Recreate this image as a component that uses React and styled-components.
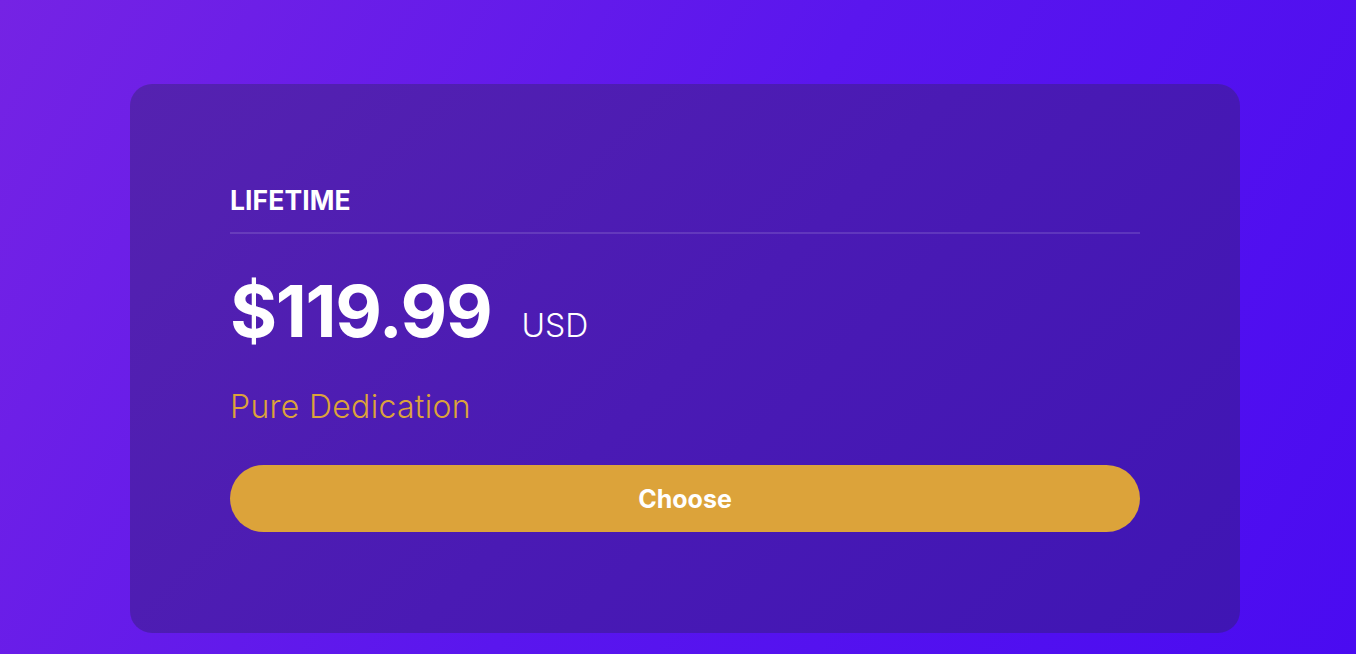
import React from "react";
import styled, { createGlobalStyle } from "styled-components";

const Global = createGlobalStyle`
  html, body { margin: 0; padding: 0; }
  body {
    font-family: Inter, "Noto Sans", sans-serif;
    background: linear-gradient(120deg, #7523e4 0%, #5a16ee 50%, #4a0bf1 100%);
    min-height: 100vh;
  }
`;

const Page = styled.div`
  min-height: 100vh;
  box-sizing: border-box;
  padding: 84px 0 22px 130px;
  display: flex;
  justify-content: flex-start;
  align-items: flex-start;
`;

const Card = styled.section`
  width: 1110px;
  box-sizing: border-box;
  padding: 99px 100px 101px;
  border-radius: 22px;
  background: linear-gradient(135deg, #5522b0 0%, #4a1ab4 50%, #3f15b4 100%);
  display: flex;
  flex-direction: column;
`;

const Title = styled.h2`
  margin: 0;
  font-size: 26.5px;
  font-weight: 700;
  line-height: 34px;
  color: #fff;
  letter-spacing: 0.1px;
  padding-bottom: 15px;
  border-bottom: 2px solid rgba(255, 255, 255, 0.13);
`;

const PriceRow = styled.div`
  display: flex;
  align-items: baseline;
  gap: 30px;
  margin-top: 33px;
`;

const Price = styled.span`
  font-size: 72px;
  font-weight: 700;
  line-height: 88px;
  color: #fff;
  letter-spacing: -1.3px;
`;

const Currency = styled.span`
  font-size: 32px;
  font-weight: 300;
  color: #fff;
`;

const Tagline = styled.p`
  margin: 32px 0 0;
  font-size: 32px;
  font-weight: 300;
  line-height: 40px;
  letter-spacing: 0.3px;
  color: #dca33a;
`;

const Button = styled.button`
  margin-top: 38px;
  height: 67px;
  border: none;
  border-radius: 34px;
  background: #dca33a;
  color: #fff;
  font-family: inherit;
  font-size: 25px;
  font-weight: 700;
  cursor: pointer;
`;

export default function App() {
  return (
    <>
      <Global />
      <Page>
        <Card>
          <Title>LIFETIME</Title>
          <PriceRow>
            <Price>$119.99</Price>
            <Currency>USD</Currency>
          </PriceRow>
          <Tagline>Pure Dedication</Tagline>
          <Button>Choose</Button>
        </Card>
      </Page>
    </>
  );
}
